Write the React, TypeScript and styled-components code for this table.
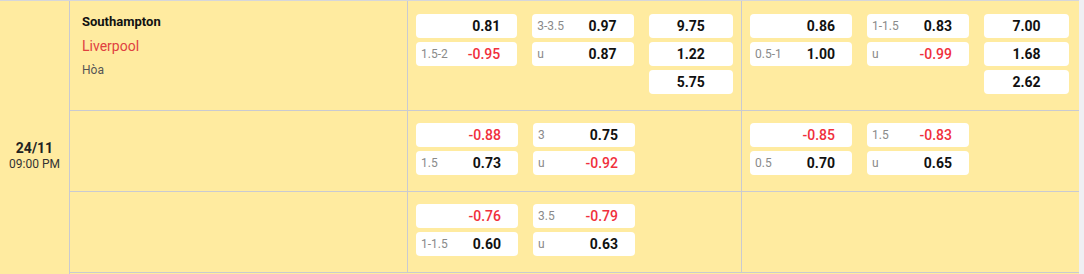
import React from 'react'
import styled, { createGlobalStyle, css } from 'styled-components'

type TOdd = { label?: string, value: string }
type TGroup = { hdp: TOdd[], ou: TOdd[], x12: string[] }
type TRow = { teams?: boolean, groups: (TGroup | null)[] }

const rows: TRow[] = [
  {
    teams: true,
    groups: [
      {
        hdp: [{ value: '0.81' }, { label: '1.5-2', value: '-0.95' }],
        ou: [{ label: '3-3.5', value: '0.97' }, { label: 'u', value: '0.87' }],
        x12: ['9.75', '1.22', '5.75'],
      },
      {
        hdp: [{ value: '0.86' }, { label: '0.5-1', value: '1.00' }],
        ou: [{ label: '1-1.5', value: '0.83' }, { label: 'u', value: '-0.99' }],
        x12: ['7.00', '1.68', '2.62'],
      },
    ],
  },
  {
    groups: [
      {
        hdp: [{ value: '-0.88' }, { label: '1.5', value: '0.73' }],
        ou: [{ label: '3', value: '0.75' }, { label: 'u', value: '-0.92' }],
        x12: [],
      },
      {
        hdp: [{ value: '-0.85' }, { label: '0.5', value: '0.70' }],
        ou: [{ label: '1.5', value: '-0.83' }, { label: 'u', value: '0.65' }],
        x12: [],
      },
    ],
  },
  {
    groups: [
      {
        hdp: [{ value: '-0.76' }, { label: '1-1.5', value: '0.60' }],
        ou: [{ label: '3.5', value: '-0.79' }, { label: 'u', value: '0.63' }],
        x12: [],
      },
      null,
    ],
  },
]

const line = '#c9cad1'
const yellow = '#ffeba0'

const GlobalStyle = createGlobalStyle`
  body {
    margin: 0;
    background: #efeff3;
    font-family: Roboto, "Liberation Sans", sans-serif;
  }
`

const Table = styled.div`
  display: flex;
  width: 1079px;
  min-height: 274px;
  background: ${yellow};
  border-top: 1px solid #d6d6da;
  box-sizing: border-box;
`

const DateCell = styled.div`
  width: 69px;
  flex-shrink: 0;
  border-right: 1px solid ${line};
  padding-top: 138px;
  text-align: center;
`

const Day = styled.div`
  font-size: 14px;
  font-weight: 700;
  color: #222;
  line-height: 18px;
`

const Time = styled.div`
  font-size: 12px;
  color: #333;
  line-height: 15px;
`

const Rows = styled.div`
  flex: 1;
  display: flex;
  flex-direction: column;
`

const Row = styled.div<{ $height: number }>`
  display: grid;
  grid-template-columns: 338px 334px 335px;
  height: ${({ $height }) => $height}px;
  border-bottom: 1px solid ${line};
`

const TeamCell = styled.div`
  border-right: 1px solid ${line};
  padding: 11px 12px 0;
`

const Home = styled.div`
  font-size: 13px;
  font-weight: 700;
  color: #111;
  line-height: 20px;
`

const Away = styled.div`
  font-size: 14px;
  color: #e0413f;
  line-height: 20px;
  margin-top: 4px;
`

const Draw = styled.div`
  font-size: 12px;
  color: #555;
  line-height: 20px;
  margin-top: 4px;
`

const MarketCell = styled.div<{ $first?: boolean, $divider?: boolean }>`
  display: flex;
  align-items: flex-start;
  gap: 15px;
  padding: ${({ $first }) => ($first ? 13 : 12)}px 8px 0;
  ${({ $divider }) => $divider && css`
    border-right: 1px solid ${line};
  `}
`

const OddsColumn = styled.div<{ $width: number }>`
  display: flex;
  flex-direction: column;
  gap: 4px;
  width: ${({ $width }) => $width}px;
`

const OddBox = styled.div<{ $center?: boolean }>`
  display: flex;
  align-items: center;
  justify-content: ${({ $center }) => ($center ? 'center' : 'space-between')};
  height: 24px;
  padding: ${({ $center }) => ($center ? '0' : '0 17px 0 5px')};
  background: #fff;
  border-radius: 4px;
`

const Label = styled.span`
  font-size: 12px;
  color: #8a8a8a;
`

const Value = styled.span<{ $negative: boolean }>`
  font-size: 14px;
  font-weight: ${({ $negative }) => ($negative ? 500 : 700)};
  color: ${({ $negative }) => ($negative ? '#f0303c' : '#111')};
`

const OddValue = ({ value }: { value: string }) => (
  <Value $negative={ value.startsWith('-') }>{ value }</Value>
)

const Market = ({ group, first, divider }: { group: TGroup | null, first?: boolean, divider?: boolean }) => (
  <MarketCell $first={ first } $divider={ divider }>
    { group && (
      <>
        <OddsColumn $width={ 102 }>
          { group.hdp.map((odd, i) => (
            <OddBox key={ i }>
              <Label>{ odd.label }</Label>
              <OddValue value={ odd.value } />
            </OddBox>
          )) }
        </OddsColumn>
        <OddsColumn $width={ 102 }>
          { group.ou.map((odd, i) => (
            <OddBox key={ i }>
              <Label>{ odd.label }</Label>
              <OddValue value={ odd.value } />
            </OddBox>
          )) }
        </OddsColumn>
        { group.x12.length > 0 && (
          <OddsColumn $width={ 85 }>
            { group.x12.map((v, i) => (
              <OddBox key={ i } $center>
                <OddValue value={ v } />
              </OddBox>
            )) }
          </OddsColumn>
        ) }
      </>
    ) }
  </MarketCell>
)

const App = () => (
  <>
    <GlobalStyle />
    <Table>
      <DateCell>
        <Day>24/11</Day>
        <Time>09:00 PM</Time>
      </DateCell>
      <Rows>
        { rows.map((row, i) => (
          <Row key={ i } $height={ i === 0 ? 109 : 80 }>
            <TeamCell>
              { row.teams && (
                <>
                  <Home>Southampton</Home>
                  <Away>Liverpool</Away>
                  <Draw>Hòa</Draw>
                </>
              ) }
            </TeamCell>
            <Market group={ row.groups[0] } first={ i === 0 } divider />
            <Market group={ row.groups[1] } first={ i === 0 } />
          </Row>
        )) }
      </Rows>
    </Table>
  </>
)

export default App
